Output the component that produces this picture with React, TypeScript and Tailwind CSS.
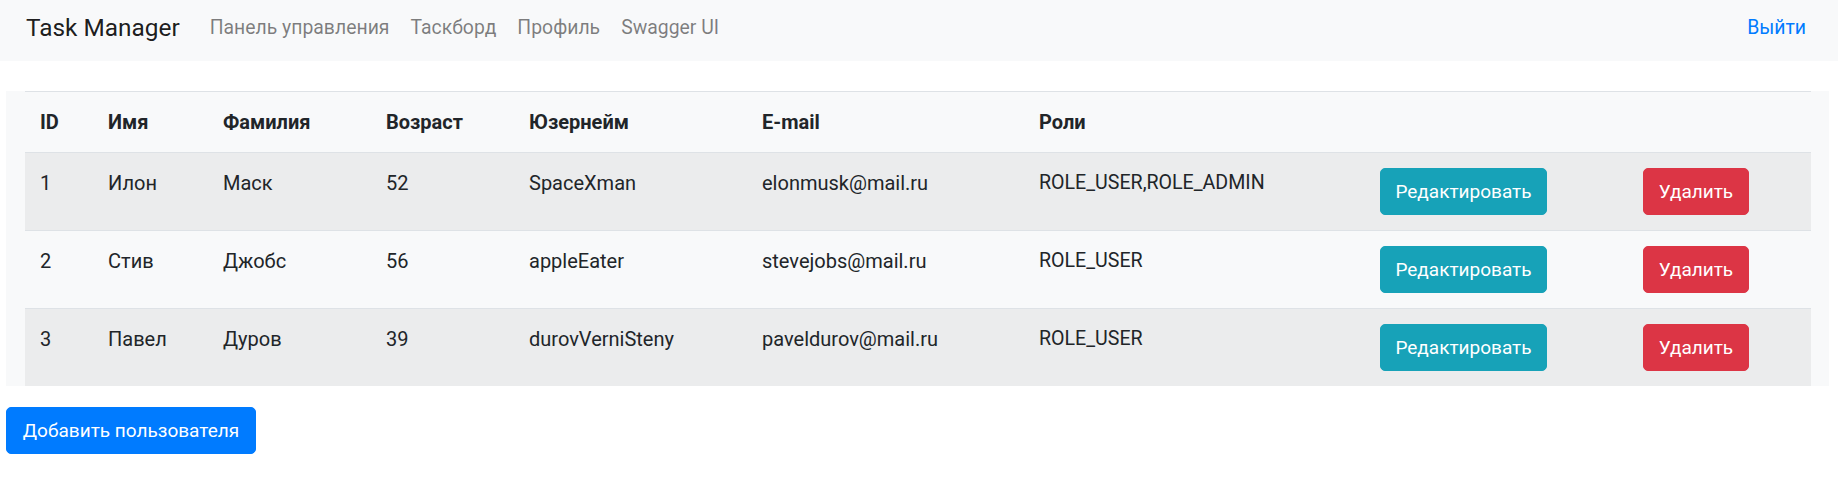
import React from "react";

type User = {
  id: number;
  firstName: string;
  lastName: string;
  age: number;
  username: string;
  email: string;
  roles: string;
};

const users: User[] = [
  { id: 1, firstName: "Илон", lastName: "Маск", age: 52, username: "SpaceXman", email: "elonmusk@mail.ru", roles: "ROLE_USER,ROLE_ADMIN" },
  { id: 2, firstName: "Стив", lastName: "Джобс", age: 56, username: "appleEater", email: "stevejobs@mail.ru", roles: "ROLE_USER" },
  { id: 3, firstName: "Павел", lastName: "Дуров", age: 39, username: "durovVerniSteny", email: "paveldurov@mail.ru", roles: "ROLE_USER" },
];

const headers = ["ID", "Имя", "Фамилия", "Возраст", "Юзернейм", "E-mail", "Роли", "", ""];

const App: React.FC = () => {
  return (
    <div className="min-h-screen bg-white font-['Roboto',sans-serif] text-[20px] leading-[30px] text-[#212529]">
      <nav className="flex h-[61px] items-center bg-[#f8f9fa] pb-[6px] pl-[26px] pr-[32px]">
        <a href="#" className="mr-[30px] text-[24.4px] leading-[38px] text-[rgba(0,0,0,0.9)]">
          Task Manager
        </a>
        <ul className="flex gap-[21px] text-[19.4px] text-[rgba(0,0,0,0.5)]">
          <li><a href="#">Панель управления</a></li>
          <li><a href="#">Таскборд</a></li>
          <li><a href="#">Профиль</a></li>
          <li><a href="#">Swagger UI</a></li>
        </ul>
        <a href="#" className="ml-auto text-[19.4px] text-[#007bff]">
          Выйти
        </a>
      </nav>

      <div className="ml-[6px] mr-[9px] mt-[30px] bg-[#f8f9fa] pl-[19px] pr-[18px]">
        <table className="w-full table-fixed border-collapse">
          <colgroup>
            <col className="w-[68px]" />
            <col className="w-[115px]" />
            <col className="w-[163px]" />
            <col className="w-[143px]" />
            <col className="w-[233px]" />
            <col className="w-[277px]" />
            <col className="w-[341px]" />
            <col className="w-[263px]" />
            <col className="w-[183px]" />
          </colgroup>
          <thead>
            <tr className="border-t border-[#dee2e6]">
              {headers.map((h, i) => (
                <th key={i} className="p-[15px] text-left align-top font-bold">
                  {h}
                </th>
              ))}
            </tr>
          </thead>
          <tbody>
            {users.map((u, i) => (
              <tr
                key={u.id}
                className={
                  i % 2 === 0
                    ? "border-t border-[#dee2e6] bg-[#ebeced]"
                    : "border-t border-[#dee2e6] bg-[#f8f9fa]"
                }
              >
                <td className="p-[15px] align-top">{u.id}</td>
                <td className="p-[15px] align-top">{u.firstName}</td>
                <td className="p-[15px] align-top">{u.lastName}</td>
                <td className="p-[15px] align-top">{u.age}</td>
                <td className="p-[15px] align-top">{u.username}</td>
                <td className="p-[15px] align-top">{u.email}</td>
                <td className="p-[15px] align-top text-[19.6px]">{u.roles}</td>
                <td className="p-[15px] align-top">
                  <button className="h-[47px] w-[167px] rounded-[5px] border border-[#17a2b8] bg-[#17a2b8] text-[19px] text-white">
                    Редактировать
                  </button>
                </td>
                <td className="p-[15px] align-top">
                  <button className="h-[47px] w-[106px] rounded-[5px] border border-[#dc3545] bg-[#dc3545] text-[19px] text-white">
                    Удалить
                  </button>
                </td>
              </tr>
            ))}
          </tbody>
        </table>
      </div>

      <button className="ml-[6px] mt-[21px] h-[47px] w-[250px] rounded-[5px] border border-[#007bff] bg-[#007bff] text-[19px] text-white">
        Добавить пользователя
      </button>
    </div>
  );
};

export default App;
